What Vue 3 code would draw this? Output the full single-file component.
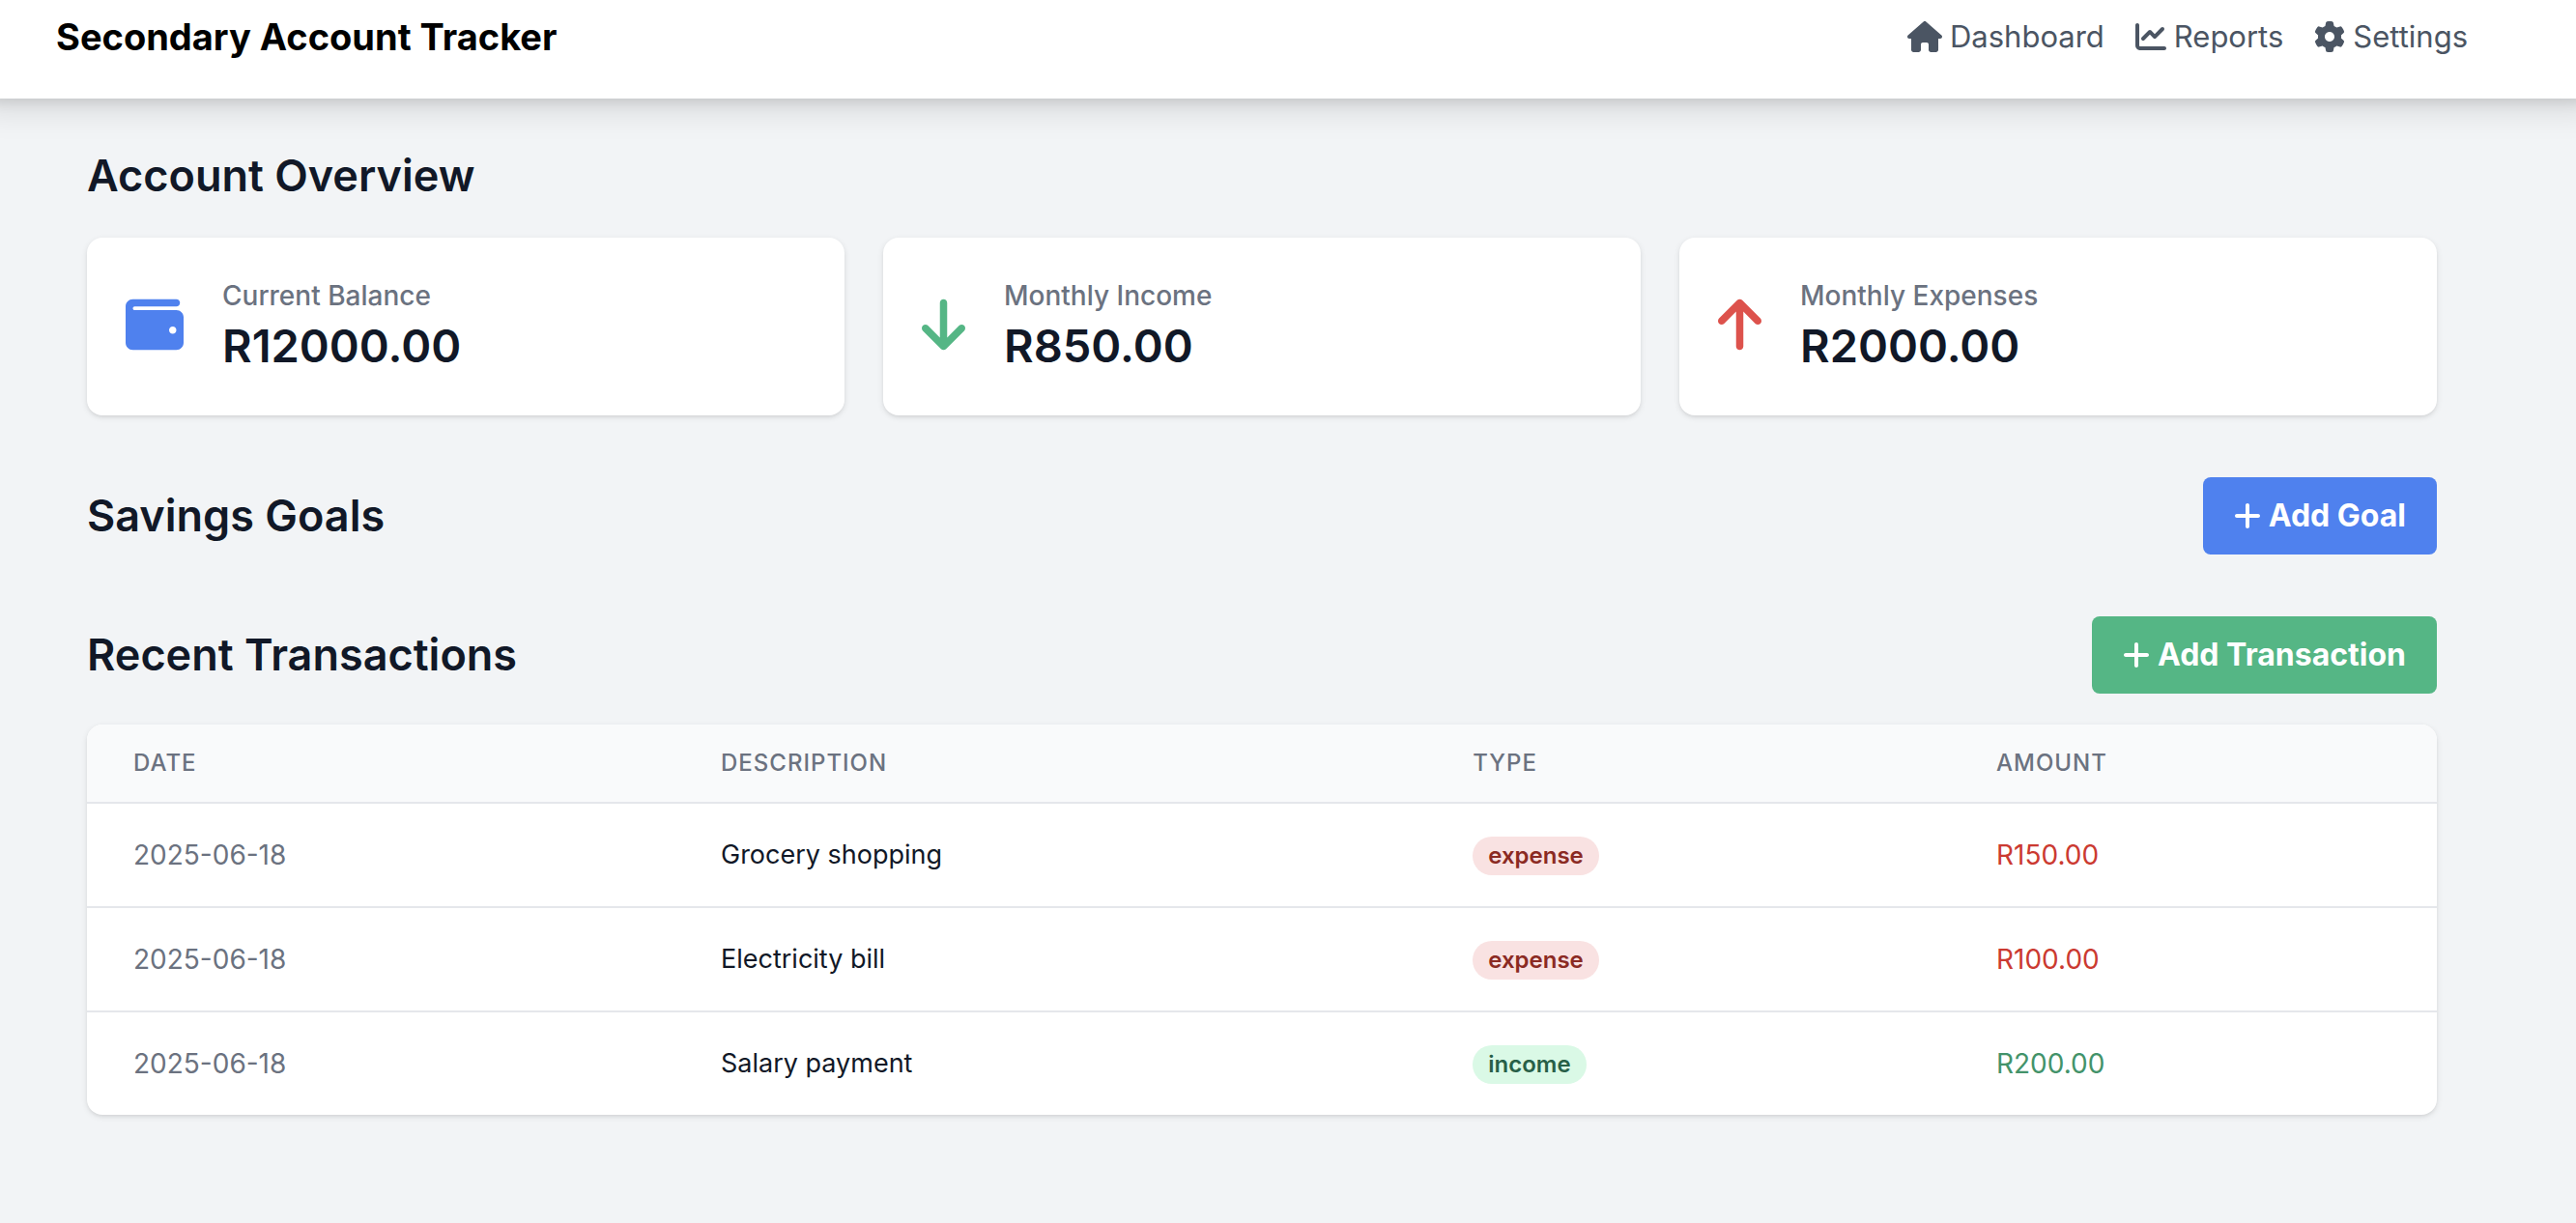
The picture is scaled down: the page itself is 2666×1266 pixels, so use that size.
<script setup>
const icons = {
  house: {
    box: '0 0 576 512',
    path: 'M575.8 255.5C575.8 273.5 560.8 287.6 543.8 287.6H511.8L512.5 447.7C512.5 450.5 512.3 453.1 512 455.8V472C512 494.1 494.1 512 472 512H392C369.9 512 352 494.1 352 472V384C352 366.3 337.7 352 320 352H256C238.3 352 224 366.3 224 384V472C224 494.1 206.1 512 184 512H104C81.91 512 64 494.1 64 472V287.6H32.05C14.02 287.6 0 273.5 0 255.5C0 246.5 3.004 238.5 10.01 231.5L266.4 8.016C273.4 1.002 281.4 0 288.4 0C295.4 0 303.4 2.004 309.5 7.014L564.8 231.5C572.8 238.5 576.9 246.5 575.8 255.5z',
  },
  chart: {
    box: '0 0 512 512',
    path: 'M64 400C64 408.8 71.16 416 80 416H480C497.7 416 512 430.3 512 448C512 465.7 497.7 480 480 480H80C35.82 480 0 444.2 0 400V64C0 46.33 14.33 32 32 32C49.67 32 64 46.33 64 64V400zM342.6 278.6C330.1 291.1 309.9 291.1 297.4 278.6L240 221.3L150.6 310.6C138.1 323.1 117.9 323.1 105.4 310.6C92.88 298.1 92.88 277.9 105.4 265.4L217.4 153.4C229.9 140.9 250.1 140.9 262.6 153.4L320 210.7L425.4 105.4C437.9 92.88 458.1 92.88 470.6 105.4C483.1 117.9 483.1 138.1 470.6 150.6L342.6 278.6z',
  },
  gear: {
    box: '0 0 512 512',
    path: 'M495.9 166.6C499.2 175.2 496.4 184.9 489.6 191.2L446.3 230.6C447.4 238.9 448 247.4 448 256C448 264.6 447.4 273.1 446.3 281.4L489.6 320.8C496.4 327.1 499.2 336.8 495.9 345.4C491.5 357.3 486.2 368.8 480.2 379.7L475.5 387.8C468.9 398.8 461.5 409.2 453.4 419.1C447.4 426.2 437.7 428.7 428.9 425.9L373.2 408.1C359.8 418.4 344.1 427 329.2 433.6L316.7 490.7C314.7 499.7 307.7 506.1 298.5 508.5C284.7 510.8 270.5 512 256 512C241.5 512 227.3 510.8 213.5 508.5C204.3 506.1 197.3 499.7 195.3 490.7L182.8 433.6C167 427 152.2 418.4 138.8 408.1L83.14 425.9C74.3 428.7 64.55 426.2 58.63 419.1C50.52 409.2 43.12 398.8 36.52 387.8L31.84 379.7C25.77 368.8 20.49 357.3 16.06 345.4C12.82 336.8 15.55 327.1 22.41 320.8L65.67 281.4C64.57 273.1 64 264.6 64 256C64 247.4 64.57 238.9 65.67 230.6L22.41 191.2C15.55 184.9 12.82 175.3 16.06 166.6C20.49 154.7 25.78 143.2 31.84 132.3L36.51 124.2C43.12 113.2 50.52 102.8 58.63 92.95C64.55 85.82 74.3 83.32 83.14 86.14L138.8 103.9C152.2 93.56 167 84.96 182.8 78.43L195.3 21.33C197.3 12.25 204.3 5.04 213.5 3.51C227.3 1.201 241.5 0 256 0C270.5 0 284.7 1.201 298.5 3.51C307.7 5.04 314.7 12.25 316.7 21.33L329.2 78.43C344.1 84.96 359.8 93.56 373.2 103.9L428.9 86.14C437.7 83.32 447.4 85.82 453.4 92.95C461.5 102.8 468.9 113.2 475.5 124.2L480.2 132.3C486.2 143.2 491.5 154.7 495.9 166.6zM256 336C300.2 336 336 300.2 336 256C336 211.8 300.2 176 256 176C211.8 176 176 211.8 176 256C176 300.2 211.8 336 256 336z',
  },
  wallet: {
    box: '0 0 512 512',
    path: 'M448 32C465.7 32 480 46.33 480 64C480 81.67 465.7 96 448 96H80C71.16 96 64 103.2 64 112C64 120.8 71.16 128 80 128H448C483.3 128 512 156.7 512 192V416C512 451.3 483.3 480 448 480H64C28.65 480 0 451.3 0 416V96C0 60.65 28.65 32 64 32H448zM416 336C433.7 336 448 321.7 448 304C448 286.3 433.7 272 416 272C398.3 272 384 286.3 384 304C384 321.7 398.3 336 416 336z',
  },
  down: {
    box: '0 0 384 512',
    path: 'M374.6 310.6l-160 160C208.4 476.9 200.2 480 192 480s-16.38-3.125-22.62-9.375l-160-160c-12.5-12.5-12.5-32.75 0-45.25s32.75-12.5 45.25 0L160 370.8V64c0-17.69 14.33-32 32-32S224 46.31 224 64v306.8l105.4-105.4c12.5-12.5 32.75-12.5 45.25 0S387.1 298.1 374.6 310.6z',
  },
  up: {
    box: '0 0 384 512',
    path: 'M374.6 246.6C368.4 252.9 360.2 256 352 256s-16.38-3.125-22.62-9.375L224 141.3V448c0 17.69-14.33 32-32 32S160 465.7 160 448V141.3L54.63 246.6c-12.5 12.5-32.75 12.5-45.25 0s-12.5-32.75 0-45.25l160-160c12.5-12.5 32.75-12.5 45.25 0l160 160C387.1 213.9 387.1 234.1 374.6 246.6z',
  },
  plus: {
    box: '0 0 448 512',
    path: 'M432 256c0 17.69-14.33 32-32 32H256v144c0 17.69-14.33 32-32 32s-32-14.3-32-32v-144H48c-17.67 0-32-14.32-32-32s14.33-32 32-32H192v-144c0-17.69 14.33-32 32-32s32 14.32 32 32v144h144C417.7 224 432 238.3 432 256z',
  },
}

const links = [
  { label: 'Dashboard', icon: icons.house },
  { label: 'Reports', icon: icons.chart },
  { label: 'Settings', icon: icons.gear },
]

const cards = [
  { label: 'Current Balance', value: 'R12000.00', icon: icons.wallet, tone: 'blue' },
  { label: 'Monthly Income', value: 'R850.00', icon: icons.down, tone: 'green' },
  { label: 'Monthly Expenses', value: 'R2000.00', icon: icons.up, tone: 'red' },
]

const transactions = [
  { date: '2025-06-18', description: 'Grocery shopping', type: 'expense', amount: 'R150.00' },
  { date: '2025-06-18', description: 'Electricity bill', type: 'expense', amount: 'R100.00' },
  { date: '2025-06-18', description: 'Salary payment', type: 'income', amount: 'R200.00' },
]
</script>

<template>
  <div class="page">
    <header class="topbar">
      <div class="container topbar-inner">
        <h1 class="brand">Secondary Account Tracker</h1>
        <nav class="nav">
          <a v-for="link in links" :key="link.label" class="nav-link" href="#">
            <svg class="icon" :viewBox="link.icon.box" aria-hidden="true"><path :d="link.icon.path" /></svg>
            <span>{{ link.label }}</span>
          </a>
        </nav>
      </div>
    </header>

    <main class="main">
      <div class="container content">
        <section>
          <h2 class="heading">Account Overview</h2>
          <div class="cards">
            <article v-for="card in cards" :key="card.label" class="card">
              <svg class="icon card-icon" :class="card.tone" :viewBox="card.icon.box" aria-hidden="true">
                <path :d="card.icon.path" />
              </svg>
              <div>
                <p class="card-label">{{ card.label }}</p>
                <p class="card-value">{{ card.value }}</p>
              </div>
            </article>
          </div>
        </section>

        <section class="section-head">
          <h2 class="heading">Savings Goals</h2>
          <button type="button" class="button button-blue">
            <svg class="icon" :viewBox="icons.plus.box" aria-hidden="true"><path :d="icons.plus.path" /></svg>
            <span>Add Goal</span>
          </button>
        </section>

        <section>
          <div class="section-head">
            <h2 class="heading">Recent Transactions</h2>
            <button type="button" class="button button-green">
              <svg class="icon" :viewBox="icons.plus.box" aria-hidden="true"><path :d="icons.plus.path" /></svg>
              <span>Add Transaction</span>
            </button>
          </div>
          <div class="table-card">
            <table class="table">
              <thead>
                <tr>
                  <th class="col-date" scope="col">Date</th>
                  <th class="col-description" scope="col">Description</th>
                  <th scope="col">Type</th>
                  <th class="col-amount" scope="col">Amount</th>
                </tr>
              </thead>
              <tbody>
                <tr v-for="item in transactions" :key="item.description">
                  <td class="date">{{ item.date }}</td>
                  <td class="description">{{ item.description }}</td>
                  <td><span class="pill" :class="item.type">{{ item.type }}</span></td>
                  <td :class="['amount', item.type]">{{ item.amount }}</td>
                </tr>
              </tbody>
            </table>
          </div>
        </section>
      </div>
    </main>
  </div>
</template>

<style>
body {
  margin: 0;
  background: #f2f4f6;
}
</style>

<style scoped>
.page {
  min-height: 100vh;
  background: #f2f4f6;
  color: #111827;
  font-family: Inter, "Liberation Sans", sans-serif;
  font-size: 32px;
  line-height: 48px;
}

h1,
h2,
p {
  margin: 0;
}

.container {
  box-sizing: border-box;
  max-width: 2560px;
  margin: 0 auto;
}

.icon {
  display: block;
  flex: none;
  height: 32px;
  fill: currentColor;
}

.topbar {
  position: relative;
  padding-right: 54px;
  background: #fff;
  box-shadow: 0 -6px 30px 20px rgba(0, 0, 0, 0.1), 0 -6px 12px 10px rgba(0, 0, 0, 0.1);
}

.topbar-inner {
  display: flex;
  align-items: center;
  justify-content: space-between;
  padding: 10px 32px 36px;
}

.brand {
  color: #000;
  font-size: 38px;
  font-weight: 700;
  line-height: 56px;
}

.nav {
  display: flex;
  gap: 32px;
  font-size: 31px;
}

.nav-link {
  display: flex;
  align-items: center;
  gap: 8px;
  color: #4b5563;
  text-decoration: none;
}

.main {
  padding-right: 54px;
}

.content {
  display: flex;
  flex-direction: column;
  gap: 64px;
  padding: 48px 64px;
}

.heading {
  font-size: 45px;
  font-weight: 600;
  line-height: 64px;
}

.cards {
  display: grid;
  grid-template-columns: repeat(3, 1fr);
  gap: 40px;
  margin-top: 32px;
}

.card {
  display: flex;
  align-items: center;
  gap: 40px;
  padding: 40px;
  border-radius: 16px;
  background: #fff;
  box-shadow: 0 2px 6px rgba(0, 0, 0, 0.1), 0 2px 4px -2px rgba(0, 0, 0, 0.1);
}

.card-icon {
  height: 60px;
  margin-bottom: 4px;
}

.blue {
  color: #4f81ee;
}

.green {
  color: #55b685;
}

.red {
  color: #dd524c;
}

.card-label {
  color: #6b7280;
  font-size: 28px;
  font-weight: 500;
  line-height: 40px;
}

.card-value {
  font-size: 47px;
  font-weight: 600;
  line-height: 64px;
}

.section-head {
  display: flex;
  align-items: center;
  justify-content: space-between;
}

.button {
  display: flex;
  align-items: center;
  gap: 8px;
  padding: 16px 32px;
  border: 0;
  border-radius: 8px;
  color: #fff;
  font: inherit;
  font-weight: 700;
}

.button-blue {
  background: #4f81ee;
}

.button-green {
  background: #55b685;
}

.table-card {
  margin-top: 32px;
  overflow: hidden;
  border-radius: 16px;
  background: #fff;
  box-shadow: 0 2px 6px rgba(0, 0, 0, 0.1), 0 2px 4px -2px rgba(0, 0, 0, 0.1);
}

.table {
  width: 100%;
  border-spacing: 0;
  table-layout: fixed;
  font-size: 28px;
  line-height: 40px;
  text-align: left;
}

.table th {
  box-sizing: border-box;
  padding: 24px 48px;
  background: #f9fafb;
  color: #6b7280;
  font-size: 24px;
  font-weight: 500;
  line-height: 32px;
  letter-spacing: 1px;
  text-transform: uppercase;
}

.col-date {
  width: 25%;
}

.col-description {
  width: 32%;
}

.col-amount {
  width: 504px;
}

.table td {
  height: 106px;
  padding: 0 48px;
  border-top: 2px solid #e5e7eb;
}

.table .date {
  color: #6b7280;
}

.description {
  font-size: 27px;
}

.pill {
  display: inline-block;
  padding: 4px 16px;
  border-radius: 20px;
  font-size: 24px;
  font-weight: 600;
  line-height: 32px;
  vertical-align: middle;
}

.pill.expense {
  background: #f9e2e2;
  color: #8b2a23;
}

.pill.income {
  background: #daf9e6;
  color: #285f48;
}

.amount.expense {
  color: #cb3a31;
}

.amount.income {
  color: #43936a;
}
</style>
